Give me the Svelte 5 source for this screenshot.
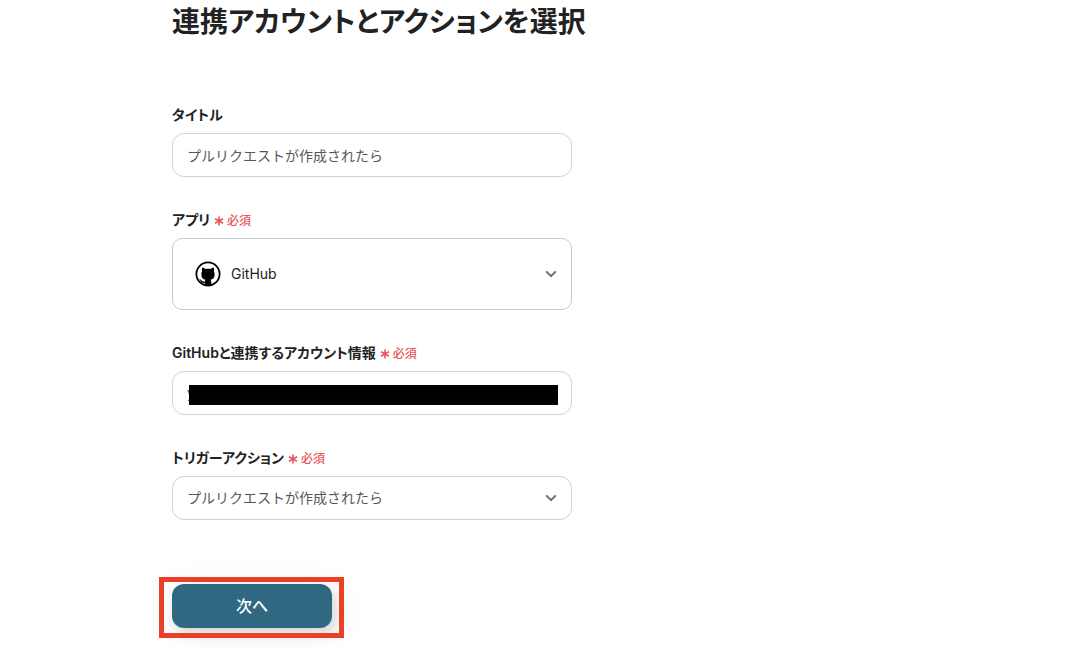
<script>
  let title = $state('プルリクエストが作成されたら');
  let app = $state('GitHub');
  let account = $state('y');
  let action = $state('プルリクエストが作成されたら');
</script>

{#snippet required()}
  <span class="required">
    <svg viewBox="0 0 10 10" aria-hidden="true">
      <path d="M5 .4v9.2M1 2.7l8 4.6M9 2.7L1 7.3" />
    </svg>必須</span>
{/snippet}

{#snippet chevron()}
  <svg class="chevron" viewBox="0 0 12 8" aria-hidden="true">
    <path d="M1.2 1.4L6 6.2l4.8-4.8" />
  </svg>
{/snippet}

<main>
  <h1>連携アカウントとアクションを選択</h1>

  <form onsubmit={(e) => e.preventDefault()}>
    <div class="field">
      <label for="title">タイトル</label>
      <input id="title" class="control" type="text" bind:value={title} />
    </div>

    <div class="field">
      <label for="app">アプリ{@render required()}</label>
      <div class="wrap">
        <select id="app" class="control large" bind:value={app}>
          <option>GitHub</option>
        </select>
        <svg class="logo" viewBox="0 0 26 26" aria-hidden="true">
          <circle cx="13" cy="13" r="11.6" fill="#fff" stroke="#000" stroke-width="1.8" />
          <path
            d="M9.800 24.600v-2.800c-2.400.4-3.300-.2-4-1.500-.4-.7-.8-1.100-1.300-1.500-.5-.4-.1-.7.4-.6.8.1 1.300.7 1.700 1.300.7 1 1.700 1.300 3.200.9.1-.8.4-1.300.8-1.700-2.800-.4-4.200-1.900-4.200-5.200 0-1.300.1-2.300.7-3.100-.3-1-.2-2.700.1-4 1.300 0 2.400.8 3.200 1.600 1.600-.3 3.600-.3 5.200 0 .8-.8 1.900-1.600 3.200-1.600.3 1.300.4 3 .1 4 .6.8.7 1.800.7 3.100 0 3.300-1.400 4.800-4.200 5.200.6.600.9 1.300.9 2.400v3.500z"
            fill="#000"
          />
        </svg>
        {@render chevron()}
      </div>
    </div>

    <div class="field">
      <label for="account">GitHubと連携するアカウント情報{@render required()}</label>
      <div class="wrap">
        <input id="account" class="control" type="text" bind:value={account} />
        <span class="redaction"></span>
      </div>
    </div>

    <div class="field">
      <label for="action">トリガーアクション{@render required()}</label>
      <div class="wrap">
        <select id="action" class="control" bind:value={action}>
          <option>プルリクエストが作成されたら</option>
        </select>
        {@render chevron()}
      </div>
    </div>

    <div class="submit">
      <button type="submit">次へ</button>
      <span class="highlight"></span>
    </div>
  </form>
</main>

<style>
  :global(body) {
    margin: 0;
    background: #fff;
    color: #222;
    font-family: Inter, 'Noto Sans CJK JP', sans-serif;
  }

  main {
    box-sizing: border-box;
    max-width: 754px;
    margin: 0 auto;
    padding: 0 16px 22px;
  }

  h1 {
    margin: 0 0 60px;
    font-size: 28px;
    line-height: 44px;
    font-weight: 600;
    font-feature-settings: 'palt';
  }

  form {
    display: flex;
    flex-direction: column;
    gap: 32px;
    max-width: 400px;
  }

  .field {
    display: flex;
    flex-direction: column;
    gap: 8px;
  }

  label {
    display: flex;
    align-items: center;
    gap: 4px;
    font-size: 14px;
    line-height: 21px;
    font-weight: 600;
    font-feature-settings: 'palt';
  }

  .required {
    display: flex;
    align-items: center;
    gap: 3px;
    padding-top: 2px;
    color: #e9545d;
    font-size: 12px;
    line-height: 19px;
    font-weight: 500;
    font-feature-settings: normal;
  }

  .required svg {
    width: 10px;
    height: 10px;
    fill: none;
    stroke: currentColor;
    stroke-width: 1.6;
  }

  .wrap {
    position: relative;
    display: flex;
  }

  .control {
    box-sizing: border-box;
    width: 100%;
    height: 44px;
    padding: 0 14px 1px;
    border: 1px solid #cfd2da;
    border-radius: 12px;
    background: #fff;
    color: #54575c;
    font: 400 14px/21px Inter, 'Noto Sans CJK JP', sans-serif;
    appearance: none;
  }

  .control.large {
    height: 72px;
    padding-left: 58px;
    border-color: #c8c8c8;
    border-radius: 10px;
    color: #222;
  }

  .control:focus-visible {
    outline: 2px solid #2e6881;
  }

  .logo {
    position: absolute;
    top: 23px;
    left: 23px;
    width: 26px;
    height: 26px;
    pointer-events: none;
  }

  .chevron {
    position: absolute;
    top: 50%;
    right: 15px;
    width: 12px;
    height: 8px;
    margin-top: -4px;
    fill: none;
    stroke: #6c6c6c;
    stroke-width: 2;
    pointer-events: none;
  }

  .redaction {
    position: absolute;
    inset: 14px 14px 10px 17px;
    background: #000;
  }

  .submit {
    position: relative;
    align-self: flex-start;
    margin-top: 32px;
  }

  button {
    display: block;
    width: 160px;
    height: 44px;
    padding: 0;
    border: 0;
    border-radius: 12px;
    background: #2e6881;
    box-shadow:
      4px 4px 32px rgba(34, 34, 34, 0.08),
      4px 6px 12px rgba(34, 34, 34, 0.14);
    color: #fff;
    font: 500 16px/24px Inter, 'Noto Sans CJK JP', sans-serif;
    cursor: pointer;
  }

  .highlight {
    position: absolute;
    inset: -7px -12px -10px -13px;
    border: 5px solid #ea4025;
    pointer-events: none;
  }
</style>
